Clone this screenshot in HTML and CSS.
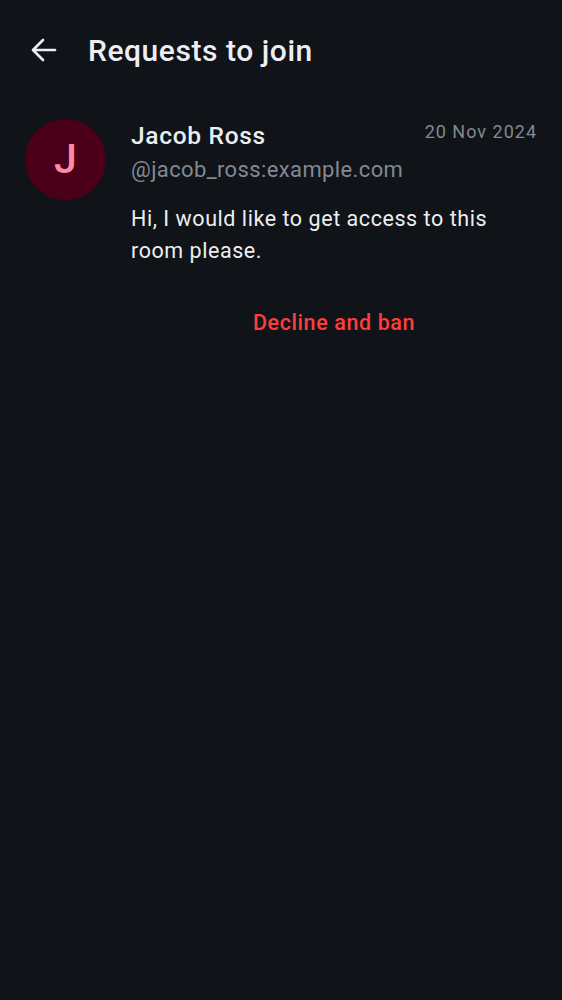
FILE: index.html
```html
<!DOCTYPE html>
<html>
<head>
<meta charset="utf-8">
<link rel="stylesheet" href="styles.css">
</head>
<body>
<div class="screen">
  <header class="topbar">
    <button class="back" aria-label="Back">
      <svg width="28" height="28" viewBox="0 0 28 28"><path d="M3 14H25M13 4L3 14l10 10" fill="none" stroke="#ebeef2" stroke-width="2.7" stroke-linecap="round" stroke-linejoin="round"/></svg>
    </button>
    <h1 class="title">Requests to join</h1>
  </header>
  <div class="request">
    <div class="avatar">J</div>
    <div class="content">
      <div class="head">
        <div class="names">
          <div class="name">Jacob Ross</div>
          <div class="handle">@jacob_ross:example.com</div>
        </div>
        <div class="date">20 Nov 2024</div>
      </div>
      <p class="message">Hi, I would like to get access to this room please.</p>
      <div class="actions"><button class="decline">Decline and ban</button></div>
    </div>
  </div>
</div>
</body>
</html>
```
FILE: styles.css
```css
html, body {
  margin: 0;
  padding: 0;
  background: #101317;
}
body {
  font-family: Roboto, "Noto Sans", sans-serif;
  color: #ebeef2;
}
.screen {
  width: 562px;
  min-height: 1000px;
  background: #101317;
}
.topbar {
  display: flex;
  align-items: center;
  height: 100px;
  padding-left: 30px;
  box-sizing: border-box;
}
.back {
  display: flex;
  background: none;
  border: 0;
  padding: 0;
  width: 28px;
  height: 28px;
  margin-right: 30px;
}
.title {
  margin: 0;
  font-size: 30px;
  font-weight: 500;
  color: #ebeef2;
  letter-spacing: 0.55px;
}
.request {
  display: flex;
  padding: 19px 25px 0 25px;
  gap: 25px;
}
.avatar {
  flex: none;
  width: 81px;
  height: 81px;
  border-radius: 50%;
  background: #4a0018;
  color: #ff88a4;
  font-size: 41px;
  font-weight: 500;
  line-height: 1;
  display: flex;
  align-items: center;
  justify-content: center;
}
.content {
  flex: 1;
}
.head {
  display: flex;
  justify-content: space-between;
  align-items: flex-start;
}
.name {
  font-size: 24.5px;
  font-weight: 500;
  line-height: 34px;
  color: #ebeef2;
  letter-spacing: 0.7px;
}
.handle {
  font-size: 22px;
  line-height: 34px;
  color: #808994;
  letter-spacing: 0.38px;
}
.date {
  font-size: 18px;
  line-height: 26px;
  color: #808994;
  letter-spacing: 1px;
}
.message {
  margin: 16px 0 0 0;
  font-size: 21.5px;
  line-height: 32px;
  color: #ebeef2;
  letter-spacing: 0.55px;
}
.actions {
  display: flex;
  justify-content: center;
  margin-top: 41px;
}
.decline {
  background: none;
  border: 0;
  padding: 0;
  font-family: Roboto, "Noto Sans", sans-serif;
  font-size: 21.5px;
  font-weight: 500;
  line-height: 30px;
  color: #ff3d3d;
  letter-spacing: 0.6px;
}
```
